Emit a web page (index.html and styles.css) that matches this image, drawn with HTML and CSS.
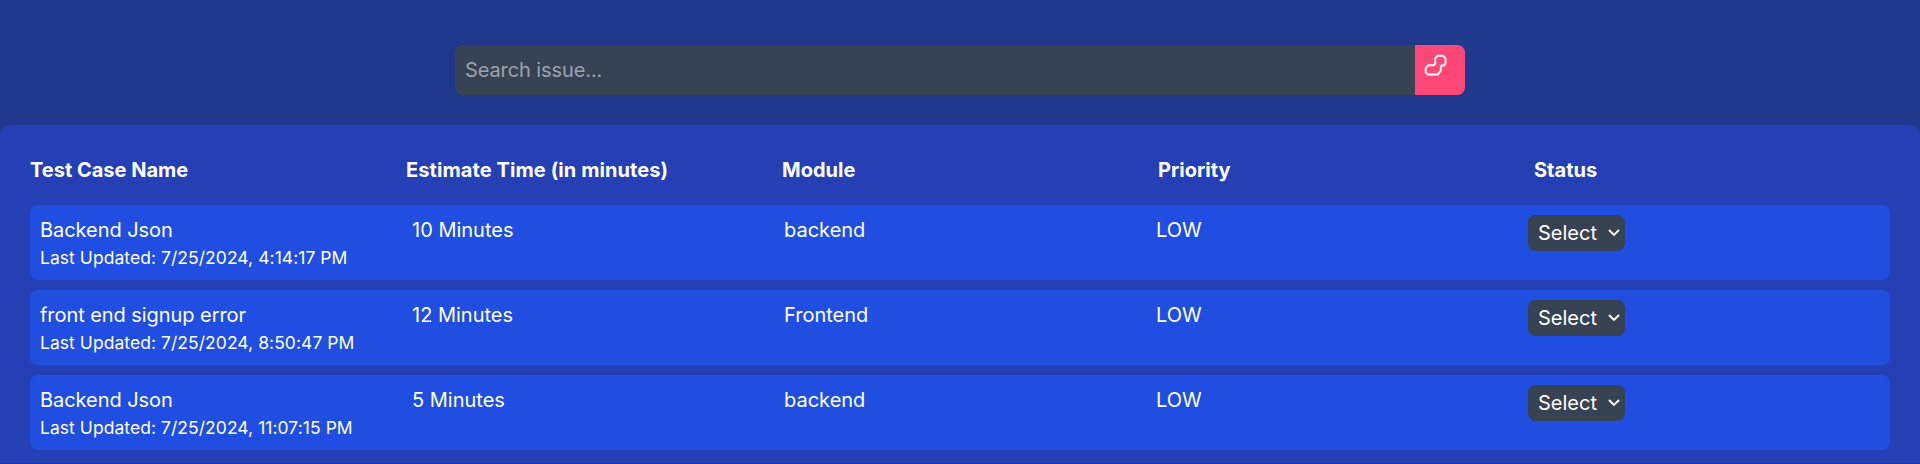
FILE: index.html
```html
<!DOCTYPE html>
<html lang="en">
<head>
<meta charset="utf-8">
<title>Test Cases</title>
<link rel="stylesheet" href="styles.css">
</head>
<body>
<form class="search">
  <input class="search-input" type="text" placeholder="Search issue...">
  <button class="search-button" type="button" aria-label="Search">
    <svg class="search-icon" viewBox="0 0 30 30"><path d="M17.500 5.800h5.500l2.500 2.500v5l-1.500 2.200h-2.500l-.7 1v4l-2.800 4h-10l-2.300-2v-4.500l2.500-2.700h5.300l1.700-1.500v-5.500z"/></svg>
  </button>
</form>
<main class="panel">
  <div class="grid head">
    <div>Test Case Name</div><div class="wide">Estimate Time (in minutes)</div><div>Module</div><div>Priority</div><div>Status</div>
  </div>
  <div class="rows">
    <div class="grid row">
      <div><p class="name">Backend Json</p><p class="updated">Last Updated: 7/25/2024, 4:14:17 PM</p></div>
      <div>10 Minutes</div><div>backend</div><div>LOW</div>
      <div class="select">Select<svg class="chevron" viewBox="0 0 12 8"><path d="M1 1l5 5 5-5"/></svg></div>
    </div>
    <div class="grid row">
      <div><p class="name">front end signup error</p><p class="updated">Last Updated: 7/25/2024, 8:50:47 PM</p></div>
      <div>12 Minutes</div><div>Frontend</div><div>LOW</div>
      <div class="select">Select<svg class="chevron" viewBox="0 0 12 8"><path d="M1 1l5 5 5-5"/></svg></div>
    </div>
    <div class="grid row">
      <div><p class="name">Backend Json</p><p class="updated">Last Updated: 7/25/2024, 11:07:15 PM</p></div>
      <div>5 Minutes</div><div>backend</div><div>LOW</div>
      <div class="select">Select<svg class="chevron" viewBox="0 0 12 8"><path d="M1 1l5 5 5-5"/></svg></div>
    </div>
  </div>
</main>
</body>
</html>
```
FILE: styles.css
```css
* { box-sizing: border-box; margin: 0; }
body {
  height: 464px;
  padding-top: 45px;
  overflow: hidden;
  background: #20398d;
  color: #fff;
  font: 20px/30px Inter, sans-serif;
}
.search { display: flex; width: 1010px; height: 50px; margin: 0 auto 30px; }
.search-input {
  width: 960px;
  padding: 10px;
  border: 0;
  border-radius: 7.5px 0 0 7.5px;
  background: #374252;
  color: #fff;
  font: inherit;
  letter-spacing: -0.1px;
}
.search-input::placeholder { color: #9ca3af; opacity: 1; }
.search-button {
  display: flex;
  align-items: flex-start;
  width: 50px;
  padding: 5px;
  border: 0;
  border-radius: 0 7.5px 7.5px 0;
  background: #ff4878;
}
.search-icon {
  width: 30px;
  height: 30px;
  fill: none;
  stroke: #fff;
  stroke-width: 1.9;
  stroke-linejoin: round;
}
.panel { height: 338px; padding: 30px; border-radius: 10px 10px 0 0; background: #253fb4; }
.grid { display: grid; grid-template-columns: repeat(5, 1fr); column-gap: 20px; }
.head { margin-bottom: 20px; font-weight: 700; }
.wide { letter-spacing: 0.09px; }
.rows { display: flex; flex-direction: column; gap: 10px; }
.row { height: 75px; padding: 10px; border-radius: 7.5px; background: #204ee0; }
.name { letter-spacing: -0.06px; }
.updated { font-size: 17.5px; line-height: 25px; letter-spacing: 0.05px; }
.select {
  display: flex;
  align-items: center;
  justify-content: space-between;
  width: 97px;
  height: 36px;
  padding: 0 5px 0 10px;
  border-radius: 7.5px;
  background: #374252;
}
.chevron { width: 12px; height: 8px; fill: none; stroke: #fff; stroke-width: 1.9; }
```
